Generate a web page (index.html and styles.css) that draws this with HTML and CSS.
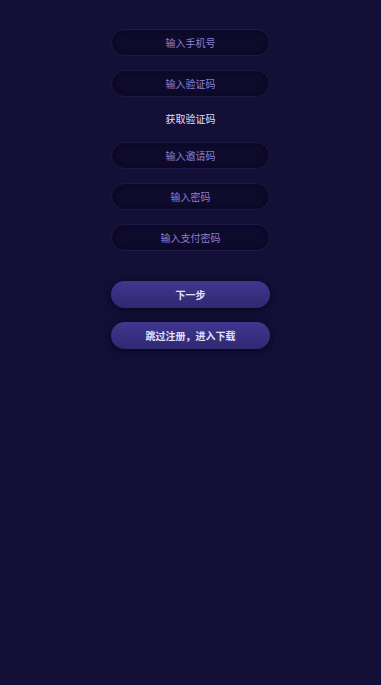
FILE: index.html
```html
<!DOCTYPE html>
<html lang="zh">
<head>
    <meta charset="UTF-8">
    <meta name="viewport" content="width=device-width, initial-scale=1.0">
    <title>注册</title>
    <link rel="stylesheet" href="styles.css">
</head>
<body>
    <div class="form">
        <input class="field" type="text" placeholder="输入手机号">
        <input class="field" type="text" placeholder="输入验证码">
        <div class="get-code">获取验证码</div>
        <input class="field" type="text" placeholder="输入邀请码">
        <input class="field" type="password" placeholder="输入密码">
        <input class="field" type="password" placeholder="输入支付密码">

        <button class="btn btn-next">下一步</button>
        <button class="btn">跳过注册，进入下载</button>
    </div>
</body>
</html>
```

FILE: styles.css
```css
body {
    margin: 0;
    background-color: #130f37;
    font-family: "Noto Sans CJK SC", "Noto Sans", sans-serif;
    min-height: 685px;
}

.form {
    width: 159px;
    margin: 0 auto;
    padding-top: 29px;
    display: flex;
    flex-direction: column;
}

.field {
    box-sizing: border-box;
    height: 27px;
    width: 100%;
    margin: 0 0 14px;
    border: 1px solid #1e1949;
    border-radius: 14px;
    background-color: #0f0b2d;
    box-shadow: inset 0 0 8px rgba(5, 3, 20, 0.6);
    color: #8b80d2;
    font-size: 10px;
    text-align: center;
    outline: none;
    font-family: inherit;
}

.field::placeholder {
    color: #8b80d2;
}

.get-code {
    margin-bottom: 15px;
    height: 16px;
    line-height: 16px;
    text-align: center;
    font-size: 10px;
    color: #e2def5;
}

.btn {
    height: 27px;
    width: 100%;
    border: none;
    border-radius: 14px;
    background: linear-gradient(#41378f, #2f2871);
    box-shadow: 0 2px 8px rgba(5, 3, 20, 0.7);
    color: #e4e0f7;
    font-size: 10px;
    font-weight: bold;
    font-family: inherit;
    margin-bottom: 14px;
    cursor: pointer;
}

.btn-next {
    margin-top: 16px;
}
```
